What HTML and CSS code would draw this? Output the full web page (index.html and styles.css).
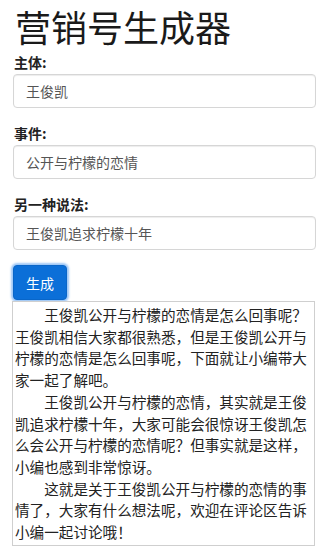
FILE: index.html
```html
<!DOCTYPE html>
<html lang="zh-CN">
<head>
<meta charset="utf-8">
<title>营销号生成器</title>
<link rel="stylesheet" href="styles.css">
</head>
<body>
<div class="page">
  <h1 class="title">营销号生成器</h1>
  <div class="group">
    <label class="label">主体:</label>
    <input class="field" type="text" value="王俊凯">
  </div>
  <div class="group">
    <label class="label">事件:</label>
    <input class="field" type="text" value="公开与柠檬的恋情">
  </div>
  <div class="group">
    <label class="label">另一种说法:</label>
    <input class="field" type="text" value="王俊凯追求柠檬十年">
  </div>
  <button class="btn" type="button">生成</button>
  <textarea class="output">　　王俊凯公开与柠檬的恋情是怎么回事呢？王俊凯相信大家都很熟悉，但是王俊凯公开与柠檬的恋情是怎么回事呢，下面就让小编带大家一起了解吧。
　　王俊凯公开与柠檬的恋情，其实就是王俊凯追求柠檬十年，大家可能会很惊讶王俊凯怎么会公开与柠檬的恋情呢？但事实就是这样，小编也感到非常惊讶。
　　这就是关于王俊凯公开与柠檬的恋情的事情了，大家有什么想法呢，欢迎在评论区告诉小编一起讨论哦！</textarea>
</div>
</body>
</html>
```

FILE: styles.css
```css
* { box-sizing: border-box; }
html, body { margin: 0; padding: 0; background: #fff; }
body {
  font-family: "Noto Sans CJK SC", "Liberation Sans", sans-serif;
  color: #333;
  font-size: 14px;
}
.page {
  padding: 0 14px 0 12px;
  display: flex;
  flex-direction: column;
}
.title {
  font-size: 36px;
  font-weight: 400;
  line-height: 52px;
  margin: 0 0 0 3px;
  color: #1a1a1a;
}
.group {
  display: flex;
  flex-direction: column;
  margin-bottom: 15px;
  padding-left: 1px;
}
.label {
  font-weight: 700;
  font-size: 14px;
  line-height: 20px;
  margin: 0 0 2px 1px;
  color: #222;
}
.field {
  height: 34px;
  padding: 6px 12px;
  font: inherit;
  font-size: 14px;
  color: #555;
  border: 1px solid #d6d6d6;
  border-radius: 4px;
  box-shadow: inset 0 1px 1px rgba(0,0,0,.075);
  background: #fff;
  width: 100%;
}
.btn {
  align-self: flex-start;
  margin: 0 0 0 1px;
  height: 35px;
  padding: 0 12px;
  font: inherit;
  font-size: 14px;
  color: #fff;
  background: #0b6fd8;
  border: 1px solid #0966c9;
  border-radius: 4px;
  box-shadow: 0 0 2px 2px rgba(40,130,235,.45);
}
.output {
  margin-top: 1px;
  height: 245px;
  width: 303px;
  padding: 2px;
  border: 1px solid #cfcfcf;
  border-radius: 0;
  font-family: "Noto Sans CJK SC", sans-serif;
  font-size: 14.6px;
  line-height: 21.7px;
  color: #222;
  resize: none;
  overflow: hidden;
  background: #fff;
}
```
